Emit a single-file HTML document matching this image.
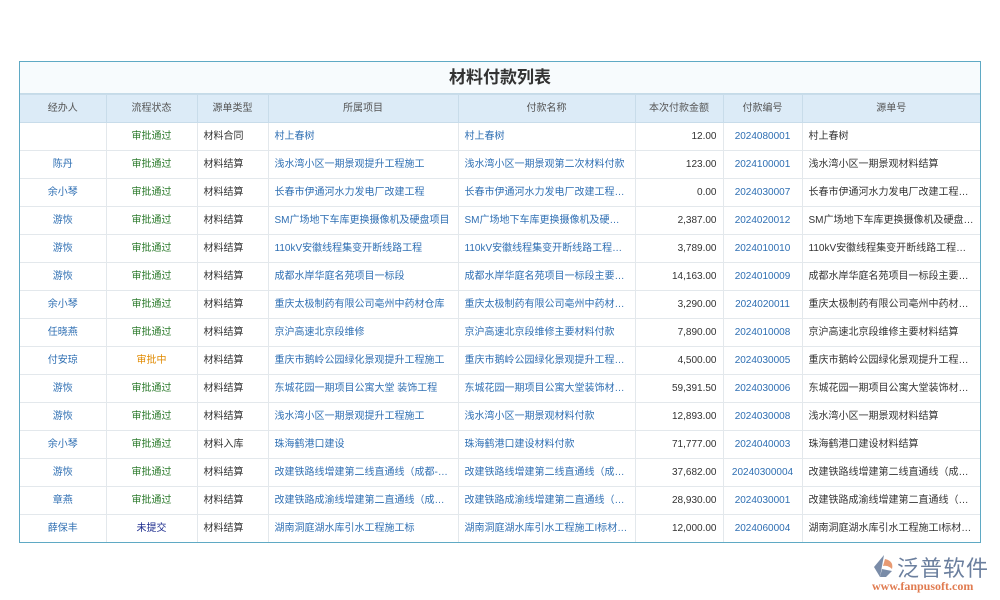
<!DOCTYPE html>
<html><head><meta charset="utf-8"><style>
body{margin:0;width:1000px;height:600px;background:#fff;font-family:"Liberation Sans","Noto Sans CJK SC",sans-serif;position:relative;overflow:hidden}
.box{position:absolute;left:19px;top:61px;width:960px;height:480px;border:1px solid #5fa9c4;background:#fff;overflow:hidden}
.title{height:31px;line-height:31px;text-align:center;font-size:17px;font-weight:bold;color:#333;background:#f7fbfd;border-bottom:1px solid #c5dbe8}
table{border-collapse:collapse;width:960px;table-layout:fixed;font-size:10px}
td,th{height:28px;line-height:14px;vertical-align:middle;border:1px solid #e3e8ec;padding:0 6px;white-space:nowrap;overflow:hidden;text-overflow:ellipsis;color:#333;box-sizing:border-box}
th{background:#dcebf7;font-weight:normal;color:#555;border-color:#c8dcea}
td{background:#fff}
.c{text-align:center}.r{text-align:right}
.b{color:#2f6fb3}.g{color:#2b7a2b}.o{color:#e08a00}.n{color:#1a2a8c}
tr td:first-child,tr th:first-child{border-left:none}
tr td:last-child,tr th:last-child{border-right:none}
</style></head><body>
<div class="box">
<div class="title">材料付款列表</div>
<table>
<colgroup><col style="width:86px"><col style="width:91px"><col style="width:71px"><col style="width:190px"><col style="width:177px"><col style="width:88px"><col style="width:79px"><col style="width:178px"></colgroup>
<tr><th>经办人</th><th>流程状态</th><th>源单类型</th><th>所属项目</th><th>付款名称</th><th>本次付款金额</th><th>付款编号</th><th>源单号</th></tr>
<tr><td class="c b"></td><td class="c g">审批通过</td><td>材料合同</td><td class="b">村上春树</td><td class="b">村上春树</td><td class="r">12.00</td><td class="c b">2024080001</td><td>村上春树</td></tr>
<tr><td class="c b">陈丹</td><td class="c g">审批通过</td><td>材料结算</td><td class="b">浅水湾小区一期景观提升工程施工</td><td class="b">浅水湾小区一期景观第二次材料付款</td><td class="r">123.00</td><td class="c b">2024100001</td><td>浅水湾小区一期景观材料结算</td></tr>
<tr><td class="c b">余小琴</td><td class="c g">审批通过</td><td>材料结算</td><td class="b">长春市伊通河水力发电厂改建工程</td><td class="b">长春市伊通河水力发电厂改建工程材料付款</td><td class="r">0.00</td><td class="c b">2024030007</td><td>长春市伊通河水力发电厂改建工程材料结算</td></tr>
<tr><td class="c b">游恢</td><td class="c g">审批通过</td><td>材料结算</td><td class="b">SM广场地下车库更换摄像机及硬盘项目</td><td class="b">SM广场地下车库更换摄像机及硬盘材料</td><td class="r">2,387.00</td><td class="c b">2024020012</td><td>SM广场地下车库更换摄像机及硬盘材料结算</td></tr>
<tr><td class="c b">游恢</td><td class="c g">审批通过</td><td>材料结算</td><td class="b">110kV安徽线程集变开断线路工程</td><td class="b">110kV安徽线程集变开断线路工程材料</td><td class="r">3,789.00</td><td class="c b">2024010010</td><td>110kV安徽线程集变开断线路工程材料结算</td></tr>
<tr><td class="c b">游恢</td><td class="c g">审批通过</td><td>材料结算</td><td class="b">成都水岸华庭名苑项目一标段</td><td class="b">成都水岸华庭名苑项目一标段主要材料</td><td class="r">14,163.00</td><td class="c b">2024010009</td><td>成都水岸华庭名苑项目一标段主要材料结算</td></tr>
<tr><td class="c b">余小琴</td><td class="c g">审批通过</td><td>材料结算</td><td class="b">重庆太极制药有限公司亳州中药材仓库</td><td class="b">重庆太极制药有限公司亳州中药材仓库</td><td class="r">3,290.00</td><td class="c b">2024020011</td><td>重庆太极制药有限公司亳州中药材仓库</td></tr>
<tr><td class="c b">任晓燕</td><td class="c g">审批通过</td><td>材料结算</td><td class="b">京沪高速北京段维修</td><td class="b">京沪高速北京段维修主要材料付款</td><td class="r">7,890.00</td><td class="c b">2024010008</td><td>京沪高速北京段维修主要材料结算</td></tr>
<tr><td class="c b">付安琼</td><td class="c o">审批中</td><td>材料结算</td><td class="b">重庆市鹅岭公园绿化景观提升工程施工</td><td class="b">重庆市鹅岭公园绿化景观提升工程材料</td><td class="r">4,500.00</td><td class="c b">2024030005</td><td>重庆市鹅岭公园绿化景观提升工程材料</td></tr>
<tr><td class="c b">游恢</td><td class="c g">审批通过</td><td>材料结算</td><td class="b">东城花园一期项目公寓大堂 装饰工程</td><td class="b">东城花园一期项目公寓大堂装饰材料付款</td><td class="r">59,391.50</td><td class="c b">2024030006</td><td>东城花园一期项目公寓大堂装饰材料结算</td></tr>
<tr><td class="c b">游恢</td><td class="c g">审批通过</td><td>材料结算</td><td class="b">浅水湾小区一期景观提升工程施工</td><td class="b">浅水湾小区一期景观材料付款</td><td class="r">12,893.00</td><td class="c b">2024030008</td><td>浅水湾小区一期景观材料结算</td></tr>
<tr><td class="c b">余小琴</td><td class="c g">审批通过</td><td>材料入库</td><td class="b">珠海鹤港口建设</td><td class="b">珠海鹤港口建设材料付款</td><td class="r">71,777.00</td><td class="c b">2024040003</td><td>珠海鹤港口建设材料结算</td></tr>
<tr><td class="c b">游恢</td><td class="c g">审批通过</td><td>材料结算</td><td class="b">改建铁路线增建第二线直通线（成都-重庆）</td><td class="b">改建铁路线增建第二线直通线（成都-重庆）</td><td class="r">37,682.00</td><td class="c b">20240300004</td><td>改建铁路线增建第二线直通线（成都-重庆）</td></tr>
<tr><td class="c b">章燕</td><td class="c g">审批通过</td><td>材料结算</td><td class="b">改建铁路成渝线增建第二直通线（成渝）</td><td class="b">改建铁路成渝线增建第二直通线（成渝）</td><td class="r">28,930.00</td><td class="c b">2024030001</td><td>改建铁路成渝线增建第二直通线（成渝）</td></tr>
<tr><td class="c b">薛保丰</td><td class="c n">未提交</td><td>材料结算</td><td class="b">湖南洞庭湖水库引水工程施工标</td><td class="b">湖南洞庭湖水库引水工程施工I标材料付款</td><td class="r">12,000.00</td><td class="c b">2024060004</td><td>湖南洞庭湖水库引水工程施工I标材料结算</td></tr>
</table>
</div>
<div style="position:absolute;left:870px;top:553px;width:26px;height:26px">
<svg width="26" height="26" viewBox="0 0 26 26"><path d="M14 2 L4 14 L10 24 Z" fill="#7a8ca8"/><path d="M15 6 Q24 8 22 16 Q18 12 13 13 Z" fill="#e89a72"/><path d="M12 16 L22 18 L16 24 L10 24 Z" fill="#7a8ca8"/></svg></div>
<div style="position:absolute;left:897px;top:551px;font-size:22px;color:#6b7f9e;letter-spacing:1px">泛普软件</div>
<div style="position:absolute;left:872px;top:579px;font-size:12px;color:#e07b50;font-family:'Liberation Serif',serif;font-weight:bold">www.fanpusoft.com</div>
</body></html>
